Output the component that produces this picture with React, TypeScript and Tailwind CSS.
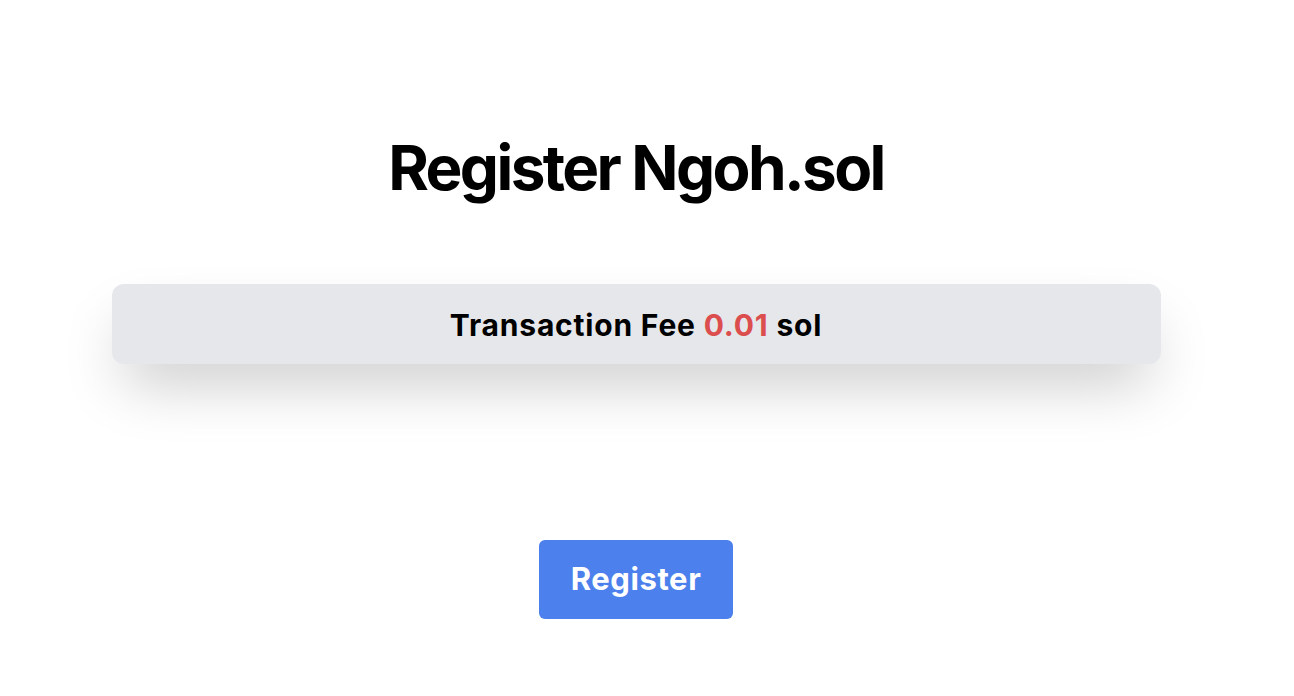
export default function App() {
  return (
    <div className="min-h-[696px] w-full bg-white" style={{ fontFamily: 'Inter, "Noto Sans", sans-serif' }}>
      <div className="flex w-[1272px] flex-col items-center">
        <h1 className="mt-[128px] text-[62px] font-bold leading-[80px] tracking-[-2.6px] text-black">Register Ngoh.sol</h1>
        <div className="mt-[76px] flex h-[80px] w-[1049px] items-center justify-center rounded-xl bg-[#e5e7eb] shadow-[0_30px_60px_-12px_rgba(0,0,0,0.22)]">
          <p className="pt-[2px] text-[30px] font-bold tracking-[0.8px] text-black">
            Transaction Fee <span className="text-[#dc4d4d]">0.01</span> sol
          </p>
        </div>
        <button className="mt-[176px] flex h-[79px] w-[194px] items-center justify-center rounded-md bg-[#4c80ec] text-[31px] font-bold tracking-[0.6px] text-white">
          Register
        </button>
      </div>
    </div>
  );
}
